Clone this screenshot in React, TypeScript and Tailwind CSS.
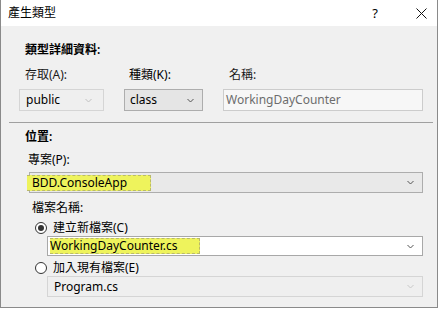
import React from 'react';

const font = { fontFamily: '"Segoe UI", "Noto Sans", "Noto Sans CJK TC", sans-serif' };

const Chevron: React.FC<{ color: string }> = ({ color }) => (
    <svg width="7" height="5" viewBox="0 0 7 5" className="shrink-0">
        <path d="M0.5 1 L3.5 4 L6.5 1" fill="none" stroke={color} strokeWidth="1" />
    </svg>
);

const Radio: React.FC<{ checked?: boolean }> = ({ checked }) => (
    <span className="flex h-[12px] w-[12px] items-center justify-center rounded-full border border-[#333333] bg-white">
        {checked && <span className="h-[6px] w-[6px] rounded-full bg-[#333333]" />}
    </span>
);

const Highlight: React.FC<{ children: React.ReactNode; className: string }> = ({ children, className }) => (
    <span className={`flex h-[16px] items-center border-y border-r border-dashed border-[#b9b96a] bg-[#eef35c] ${className}`}>
        {children}
    </span>
);

export default function App() {
    return (
        <div className="h-[309px] w-[438px] bg-white text-[12px] leading-[16px] text-black" style={font}>
            <div className="flex h-[308px] flex-col border-x border-b border-[#8a8a8a]">
                {/* title bar */}
                <div className="flex h-[26px] items-center bg-white pl-[7px]">
                    <span className="text-[12px]">產生類型</span>
                    <span className="ml-auto mr-[38px] text-[13px]">?</span>
                    <svg width="11" height="11" viewBox="0 0 11 11" className="mr-[10px]">
                        <path d="M0.5 0.5 L10.5 10.5 M10.5 0.5 L0.5 10.5" stroke="#111" strokeWidth="1" />
                    </svg>
                </div>

                <div className="flex flex-1 flex-col bg-[#f0f0f0]">
                    {/* type details */}
                    <div className="mt-[16px] pl-[24px] font-semibold">類型詳細資料:</div>
                    <div className="mt-[9px] flex pl-[18px]">
                        <div className="flex w-[105px] flex-col">
                            <span className="pl-[6px] text-[#1a1a1a]">存取(A):</span>
                            <div className="mt-[6px] flex h-[22px] w-[85px] items-center border border-[#d5d5d5] bg-[#efefef] pl-[6px] pr-[11px]">
                                <span>public</span>
                                <span className="ml-auto"><Chevron color="#c0c0c0" /></span>
                            </div>
                        </div>
                        <div className="flex w-[99px] flex-col">
                            <span className="pl-[5px]">種類(K):</span>
                            <div className="mt-[6px] flex h-[22px] w-[79px] items-center border border-[#adadad] bg-[#e5e5e5] pl-[5px] pr-[8px]">
                                <span>class</span>
                                <span className="ml-auto"><Chevron color="#555555" /></span>
                            </div>
                        </div>
                        <div className="flex flex-1 flex-col pr-[14px]">
                            <span className="pl-[6px] text-[#1a1a1a]">名稱:</span>
                            <div className="mt-[6px] flex h-[22px] items-center border border-[#cccccc] bg-[#f7f7f7] pl-[2px]">
                                <span className="text-[#6d6d6d]">WorkingDayCounter</span>
                            </div>
                        </div>
                    </div>

                    <div className="ml-[8px] mr-[4px] mt-[11px] h-px bg-[#a0a0a0]" />

                    {/* location */}
                    <div className="mt-[6px] pl-[24px] font-semibold">位置:</div>
                    <div className="mt-[7px] pl-[27px]">專案(P):</div>
                    <div className="ml-[28px] mr-[14px] mt-[4px] flex h-[21px] items-center border border-[#adadad] bg-[#e9e9e9] pr-[8px]">
                        <Highlight className="-ml-[3px] w-[124px] pl-[5px]">BDD.ConsoleApp</Highlight>
                        <span className="ml-auto"><Chevron color="#555555" /></span>
                    </div>

                    <div className="mt-[7px] pl-[31px]">檔案名稱:</div>
                    <div className="mt-[4px] flex h-[16px] items-center gap-[6px] pl-[34px]">
                        <Radio checked />
                        <span>建立新檔案(C)</span>
                    </div>
                    <div className="ml-[46px] mr-[14px] flex h-[20px] items-center border border-[#a8a8a8] bg-white pl-[2px] pr-[8px]">
                        <Highlight className="w-[150px]">WorkingDayCounter.cs</Highlight>
                        <span className="ml-auto"><Chevron color="#555555" /></span>
                    </div>
                    <div className="mt-[4px] flex h-[16px] items-center gap-[6px] pl-[34px]">
                        <Radio />
                        <span>加入現有檔案(E)</span>
                    </div>
                    <div className="ml-[46px] mr-[14px] flex h-[21px] items-center border border-[#d5d5d5] bg-[#efefef] pl-[6px] pr-[8px]">
                        <span>Program.cs</span>
                        <span className="ml-auto"><Chevron color="#c8c8c8" /></span>
                    </div>
                </div>
            </div>
        </div>
    );
}
